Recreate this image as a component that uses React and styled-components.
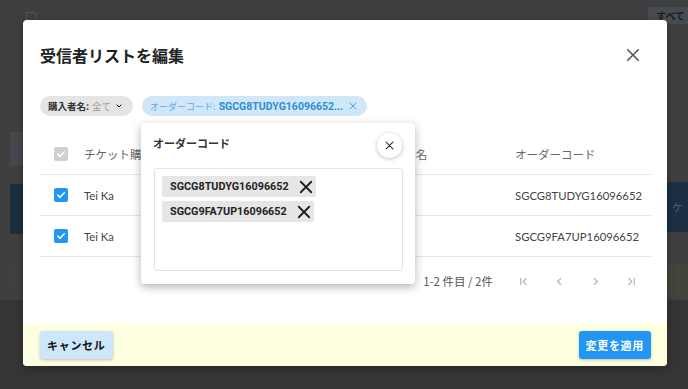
import React from 'react'
import styled, { createGlobalStyle } from 'styled-components'

const GlobalStyle = createGlobalStyle`
  html, body { margin: 0; padding: 0; }
  body {
    background: #353535;
    font-family: "Noto Sans CJK JP", "Noto Sans", sans-serif;
  }
`

const Screen = styled.div`
  position: relative;
  width: 688px;
  height: 389px;
  overflow: hidden;
  background: #353535;
`

// the page seen through the dark backdrop: only its edges show around the modal
const BackPage = styled.div`
  height: 300px;
  background: #3f3f3f;
  display: flex;
  flex-direction: column;
`

const BackBar = styled.div`
  display: flex;
  align-items: flex-start;
  justify-content: space-between;
  height: 20px;
  padding: 0 0 0 26px;
`

const BackCheck = styled.span`
  margin-top: 12px;
  width: 8px;
  height: 8px;
  border: 1px solid #555;
  border-radius: 2px;
`

const BackButton = styled.span`
  margin-top: 7px;
  background: #474c53;
  color: #1c1c1c;
  font-size: 10px;
  font-weight: 700;
  padding: 0 3px 0 8px;
  height: 17px;
  line-height: 17px;
  white-space: nowrap;
`

const BackBody = styled.div`
  flex: 1;
  display: flex;
  justify-content: space-between;
`

const Strip = styled.div`
  width: ${p => p.$w}px;
  margin-left: ${p => p.$ml || 0}px;
  display: flex;
  flex-direction: column;
`

const Band = styled.div`
  margin-top: ${p => p.$top}px;
  height: ${p => p.$h}px;
  background: ${p => p.$bg};
  color: #56606b;
  font-size: 11px;
  display: flex;
  align-items: center;
  padding-left: 5px;
`

const Backdrop = styled.div`
  position: absolute;
  inset: 0;
  z-index: 5;
`

const Modal = styled.div`
  position: absolute;
  left: 23px;
  top: 20px;
  width: 644px;
  height: 346px;
  background-color: #ffffff;
  border-radius: 4px;
  overflow: hidden;
  display: flex;
  flex-direction: column;
  box-shadow: 0 2px 8px rgba(0, 0, 0, 0.3);
`

const Header = styled.div`
  display: flex;
  align-items: center;
  justify-content: space-between;
  padding: 24px 27px 0 17px;
  height: 22px;
`

const Title = styled.h2`
  margin: 0;
  font-size: 16px;
  line-height: 22px;
  font-weight: 700;
  color: #222;
`

const IconButton = styled.button`
  border: none;
  background: none;
  padding: 0;
  display: flex;
  color: #555;
  cursor: pointer;
`

const Filters = styled.div`
  display: flex;
  gap: 9px;
  padding: 0 17px;
  margin-top: 30px;
`

const FilterChip = styled.span`
  display: inline-flex;
  align-items: center;
  gap: 3px;
  height: 20px;
  padding: 0 ${p => (p.$active ? 10 : 9)}px 0 8px;
  border-radius: 10px;
  background: ${p => (p.$active ? '#cfe7f9' : '#e5e5e5')};
  font-size: 9.5px;
  white-space: nowrap;
`

const ChipLabel = styled.span`
  font-weight: ${p => (p.$active ? 400 : 700)};
  color: ${p => (p.$active ? '#63acde' : '#333')};
  font-size: ${p => (p.$active ? 9 : 9.5)}px;
`

const ChipValue = styled.span`
  color: ${p => (p.$active ? '#2f8ed4' : '#999')};
  font-weight: ${p => (p.$active ? 700 : 400)};
  font-family: ${p => (p.$active ? '"Roboto", "Noto Sans CJK JP", sans-serif' : 'inherit')};
  font-size: ${p => (p.$active ? 10.5 : 9.5)}px;
`

const Table = styled.div`
  margin: 18px 15px 0 17px;
  display: grid;
  grid-template-columns: 44px 286px 145px 1fr;
`

const Cell = styled.div`
  display: flex;
  align-items: center;
  height: 40px;
  border-bottom: 1px solid #e6e6e6;
  padding-left: ${p => (p.$first ? 14 : 0)}px;
  color: ${p => (p.$head ? '#666' : '#444')};
  font-family: ${p => (p.$latin ? '"Lato", "Noto Sans CJK JP", sans-serif' : 'inherit')};
  font-size: ${p => (p.$latin ? 11.3 : 11.5)}px;
  white-space: nowrap;
`

const Check = styled.span`
  width: 14px;
  height: 14px;
  border-radius: 2px;
  background: ${p => (p.$disabled ? '#d0d0d0' : '#2196f3')};
  display: flex;
  align-items: center;
  justify-content: center;
`

const Pager = styled.div`
  display: flex;
  align-items: center;
  justify-content: flex-end;
  margin: 11px 30px 0 17px;
  height: 26px;
  color: #555;
  font-size: 11.5px;
`

const PagerText = styled.span`
  margin-right: 25px;
`

const PagerIcons = styled.div`
  display: flex;
  gap: 25px;
  color: #b0b0b0;
`

const Footer = styled.div`
  margin-top: auto;
  background: #fefee0;
  display: flex;
  justify-content: space-between;
  align-items: center;
  padding: 0 16px 0 17px;
  height: 43px;
`

const Button = styled.button`
  border: none;
  border-radius: 3px;
  height: 28px;
  padding: 0 7px;
  font-family: "Noto Sans CJK JP", sans-serif;
  font-size: 11px;
  font-weight: 700;
  letter-spacing: 0.7px;
  background: ${p => (p.$primary ? '#2196f3' : '#cde6fa')};
  color: ${p => (p.$primary ? '#fff' : '#111')};
  box-shadow: 0 1px 3px rgba(0, 0, 0, 0.25);
`

const Popover = styled.div`
  position: absolute;
  left: 118px;
  top: 103px;
  width: 274px;
  height: 161px;
  box-sizing: border-box;
  background: #fff;
  border-radius: 4px;
  box-shadow: 0 3px 10px rgba(0, 0, 0, 0.3);
  padding: 10px 12px 13px 12px;
  display: flex;
  flex-direction: column;
`

const PopHead = styled.div`
  display: flex;
  justify-content: space-between;
  align-items: flex-start;
  height: 35px;
`

const PopTitle = styled.span`
  font-size: 11px;
  font-weight: 700;
  color: #333;
  margin-top: 2px;
`

const RoundClose = styled.button`
  width: 25px;
  height: 25px;
  border-radius: 50%;
  border: none;
  background: #fff;
  box-shadow: 0 1px 4px rgba(0, 0, 0, 0.25);
  display: flex;
  align-items: center;
  justify-content: center;
  padding: 0;
  color: #333;
  margin-right: 1px;
`

const CodeBox = styled.div`
  flex: 1;
  margin-left: 1px;
  border: 1px solid #e3e3e3;
  border-radius: 3px;
  padding: 7px 7px;
  display: flex;
  flex-direction: column;
  align-items: flex-start;
  gap: 4px;
`

const CodeChip = styled.span`
  display: inline-flex;
  align-items: center;
  gap: 10px;
  height: 21px;
  padding: 0 3px 0 8px;
  background: #e6e6e6;
  border-radius: 2px;
  font-family: "Roboto", "Liberation Sans", sans-serif;
  font-weight: 700;
  font-size: 10.8px;
  color: #222;
`

const Cross = ({ size = 12, stroke = 1.6 }) => (
  <svg width={size} height={size} viewBox="0 0 12 12" fill="none" stroke="currentColor" strokeWidth={stroke} strokeLinecap="round">
    <path d="M1.5 1.5 L10.5 10.5 M10.5 1.5 L1.5 10.5" />
  </svg>
)

const Tick = () => (
  <svg width="10" height="10" viewBox="0 0 10 10" fill="none" stroke="#fff" strokeWidth="1.6" strokeLinecap="round" strokeLinejoin="round">
    <path d="M1.8 5.2 L4 7.3 L8.3 2.8" />
  </svg>
)

const Chevron = ({ d, size = 11 }) => (
  <svg width={size} height={size} viewBox="0 0 12 12" fill="none" stroke="currentColor" strokeWidth="1.2" strokeLinecap="round" strokeLinejoin="round">
    <path d={d} />
  </svg>
)

const rows = [
  { name: 'Tei Ka', user: '鄭 佳區', code: 'SGCG8TUDYG16096652' },
  { name: 'Tei Ka', user: '鄭 佳區', code: 'SGCG9FA7UP16096652' },
]

export default function App() {
  return (
    <Screen>
      <GlobalStyle />
      <BackPage>
        <BackBar>
          <BackCheck />
          <BackButton>すべて</BackButton>
        </BackBar>
        <BackBody>
          <Strip $w={13} $ml={10}>
            <Band $top={112} $h={34} $bg="#45484d" />
            <Band $top={18} $h={50} $bg="#1c2e41" />
            <Band $top={26} $h={32} $bg="#3f4044" />
          </Strip>
          <Strip $w={21}>
            <Band $top={162} $h={50} $bg="#1c2e41">ケ</Band>
            <Band $top={32} $h={34} $bg="#45443b" />
          </Strip>
        </BackBody>
      </BackPage>
      <Backdrop>
        <Modal>
          <Header>
            <Title>受信者リストを編集</Title>
            <IconButton><Cross size={14} stroke={1.4} /></IconButton>
          </Header>
          <Filters>
            <FilterChip>
              <ChipLabel>購入者名:</ChipLabel>
              <ChipValue>全て</ChipValue>
              <Chevron d="M3.5 4.8 L6 7.2 L8.5 4.8" size={10} />
            </FilterChip>
            <FilterChip $active>
              <ChipLabel $active>オーダーコード:</ChipLabel>
              <ChipValue $active>SGCG8TUDYG16096652...</ChipValue>
              <span style={{ color: '#4aa0dc', display: 'flex', marginLeft: 3 }}><Cross size={8} stroke={1.5} /></span>
            </FilterChip>
          </Filters>
          <Table>
            <Cell $head $first><Check $disabled><Tick /></Check></Cell>
            <Cell $head>チケット購入者名</Cell>
            <Cell $head>ユーザー名</Cell>
            <Cell $head>オーダーコード</Cell>
            {rows.map((r, i) => (
              <React.Fragment key={i}>
                <Cell $first><Check><Tick /></Check></Cell>
                <Cell $latin>{r.name}</Cell>
                <Cell>{r.user}</Cell>
                <Cell $latin>{r.code}</Cell>
              </React.Fragment>
            ))}
          </Table>
          <Pager>
            <PagerText>1-2 件目 / 2件</PagerText>
            <PagerIcons>
              <Chevron d="M3 2.5 V9.5 M9 2.5 L5.5 6 L9 9.5" />
              <Chevron d="M7.5 2.5 L4 6 L7.5 9.5" />
              <Chevron d="M4.5 2.5 L8 6 L4.5 9.5" />
              <Chevron d="M3 2.5 L6.5 6 L3 9.5 M9 2.5 V9.5" />
            </PagerIcons>
          </Pager>
          <Footer>
            <Button>キャンセル</Button>
            <Button $primary>変更を適用</Button>
          </Footer>
          <Popover>
            <PopHead>
              <PopTitle>オーダーコード</PopTitle>
              <RoundClose><Cross size={9} stroke={1.5} /></RoundClose>
            </PopHead>
            <CodeBox>
              <CodeChip>SGCG8TUDYG16096652<Cross size={14} stroke={1.6} /></CodeChip>
              <CodeChip>SGCG9FA7UP16096652<Cross size={14} stroke={1.6} /></CodeChip>
            </CodeBox>
          </Popover>
        </Modal>
      </Backdrop>
    </Screen>
  )
}
